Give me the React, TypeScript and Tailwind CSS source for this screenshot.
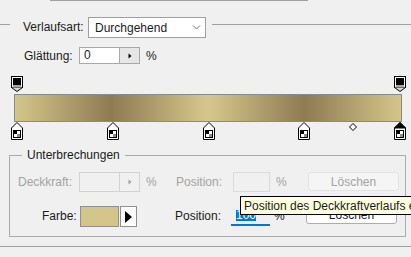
import React from 'react';

const stops = [
  { pos: 0, selected: false },
  { pos: 25, selected: false },
  { pos: 50, selected: false },
  { pos: 75, selected: false },
  { pos: 100, selected: true },
];

const opacityStops = [0, 100];

const stopLeft = (p: number) => Math.round(p * 3.83 - 3);

function OpacityStop() {
  return (
    <svg width="12" height="16" viewBox="0 0 12 16">
      <rect x="0.5" y="0.5" width="11" height="11" fill="#fff" stroke="#000" />
      <rect x="2" y="2" width="8" height="7" fill="#000" />
      <rect x="2" y="9" width="8" height="2" fill="#a8a8a8" />
      <path d="M0.5 11.5 L6 15.5 L11.5 11.5" fill="#d8d8d8" stroke="#000" />
    </svg>
  );
}

function ColorStop({ selected }: { selected: boolean }) {
  return (
    <svg width="12" height="18" viewBox="0 0 12 18">
      <path d="M6 0.5 L11.5 6 V17.5 H0.5 V6 Z" fill="#fff" stroke="#000" />
      {selected && <path d="M6 0.5 L11.5 6 H0.5 Z" fill="#000" stroke="#000" />}
      <rect x="2.5" y="8.5" width="7" height="7" fill="#fff" stroke="#000" />
      <rect x="3" y="9" width="3" height="3" fill="#000" />
      <rect x="6" y="12" width="3" height="3" fill="#8c8c8c" />
    </svg>
  );
}

function SpinTri({ color }: { color: string }) {
  return (
    <svg width="4" height="6" viewBox="0 0 4 6">
      <path d="M0.5 0.5 L3.5 3 L0.5 5.5 Z" fill={color} />
    </svg>
  );
}

export default function App() {
  return (
    <div className="relative w-[411px] h-[257px] overflow-hidden bg-[#f0f0f0] text-[12px] text-[#1b1b1b] font-['Liberation_Sans',Arial,sans-serif] leading-none">
      {/* frame edge */}
      <div className="h-px ml-[50px] w-[258px] bg-[#a0a0a0]" />

      {/* Verlaufsart */}
      <div className="mt-[16px] flex items-start h-[21px]">
        <div className="w-[10px] h-px mt-[7px] bg-[#a0a0a0]" />
        <span className="ml-[13px] w-[65px] leading-[21px]">Verlaufsart:</span>
        <div className="w-[118px] h-[21px] border border-[#a0a0a0] bg-white flex items-center pl-[6px]">
          <span className="flex-1">Durchgehend</span>
          <svg width="9" height="5" viewBox="0 0 9 5" className="mr-[4px]">
            <path d="M1 0.5 L4.5 4 L8 0.5" fill="none" stroke="#6d6d6d" />
          </svg>
        </div>
        <div className="flex-1 ml-[6px] mt-[7px] h-px bg-[#a0a0a0]" />
      </div>

      {/* Glättung */}
      <div className="mt-[9px] flex items-center h-[17px]">
        <span className="ml-[24px] w-[55px]">Glättung:</span>
        <div className="w-[61px] h-[17px] border border-[#a9a9a9] bg-white flex">
          <span className="flex-1 pl-[4px] leading-[15px]">0</span>
          <div className="w-[20px] bg-[#e6e6e6] border-l border-[#a9a9a9] flex items-center justify-center">
            <SpinTri color="#000" />
          </div>
        </div>
        <span className="ml-[6px]">%</span>
      </div>

      {/* Gradient */}
      <div className="ml-[14px] mt-[12px] w-[388px]">
        <div className="relative h-[16px]">
          {opacityStops.map((p) => (
            <div key={p} className="absolute top-0" style={{ left: stopLeft(p) }}>
              <OpacityStop />
            </div>
          ))}
        </div>
        <div className="mt-[2px] h-[28px] border border-[#8a8a8a] bg-[linear-gradient(to_right,#d4c68a_0%,#8e7b52_25%,#d6c88c_50%,#8e7b52_75%,#d4c68a_100%)]" />
        <div className="relative h-[19px]">
          {stops.map((s) => (
            <div key={s.pos} className="absolute top-0" style={{ left: stopLeft(s.pos) }}>
              <ColorStop selected={s.selected} />
            </div>
          ))}
          <svg width="8" height="8" viewBox="0 0 8 8" className="absolute left-[335px] top-[1px]">
            <path d="M4 0.5 L7.5 4 L4 7.5 L0.5 4 Z" fill="#fff" stroke="#000" />
          </svg>
        </div>
      </div>

      {/* Unterbrechungen */}
      <div className="relative mt-[14px] ml-[9px] w-[397px] h-[82px] border border-[#ababab] pt-[16px]">
        <span className="absolute -top-[7px] left-[12px] px-[5px] bg-[#f0f0f0]">Unterbrechungen</span>

        <div className="flex items-start h-[20px] text-[#a3a3a3]">
          <span className="ml-[8px] w-[61px] leading-[20px]">Deckkraft:</span>
          <div className="w-[61px] h-[20px] border border-[#d2d2d2] flex">
            <div className="flex-1" />
            <div className="w-[20px] border-l border-[#d2d2d2] flex items-center justify-center">
              <SpinTri color="#a0a0a0" />
            </div>
          </div>
          <span className="ml-[6px] w-[30px] leading-[20px]">%</span>
          <span className="w-[57px] leading-[20px]">Position:</span>
          <div className="w-[37px] h-[20px] border border-[#dadada]" />
          <span className="ml-[6px] w-[32px] leading-[20px]">%</span>
          <div className="w-[91px] h-[19px] rounded-[3px] border border-[#e3e3e3] bg-[#f5f5f5] flex items-center justify-center">
            Löschen
          </div>
        </div>

        <div className="mt-[14px] flex items-start h-[21px]">
          <span className="ml-[32px] w-[38px] leading-[21px]">Farbe:</span>
          <div className="w-[39px] h-[21px] border border-[#8f8f8f] bg-[#d4c68a]" />
          <div className="ml-[1px] w-[17px] h-[21px] border border-[#8f8f8f] bg-white flex items-center justify-center">
            <svg width="7" height="12" viewBox="0 0 7 12">
              <path d="M0 0 L7 6 L0 12 Z" fill="#000" />
            </svg>
          </div>
          <span className="ml-[38px] w-[56px] leading-[21px]">Position:</span>
          <div className="w-[39px] h-[20px] border-b-2 border-[#0078d7] flex items-center pl-[5px]">
            <span className="bg-[#0078d7] text-white leading-[11px]">100</span>
          </div>
          <span className="ml-[4px] w-[32px] leading-[21px]">%</span>
          <div className="-mt-[1px] w-[91px] h-[19px] rounded-[3px] border border-[#adadad] bg-white flex items-center justify-center">
            Löschen
          </div>
        </div>
      </div>

      <div className="mt-[9px] h-px bg-[#a0a0a0]" />

      {/* tooltip */}
      <div className="absolute left-[240px] top-[196px] h-[19px] border border-black bg-[#ffffe1] px-[3px] flex items-center whitespace-nowrap">
        Position des Deckkraftverlaufs einstellen
      </div>
    </div>
  );
}
